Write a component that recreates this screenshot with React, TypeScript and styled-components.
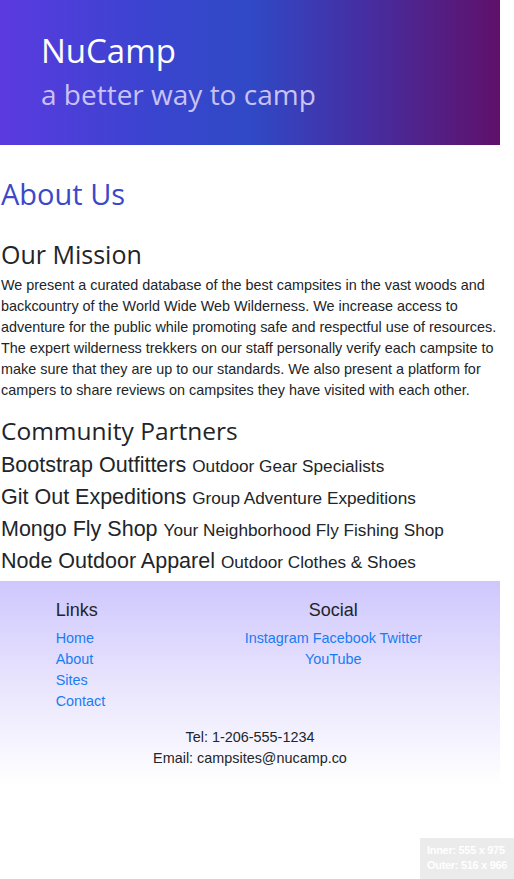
import React from "react";
import styled, { createGlobalStyle } from "styled-components";

const Global = createGlobalStyle`
  html, body { margin: 0; padding: 0; background: #fff; }
  body { font-family: "Liberation Sans", Arial, sans-serif; color: #212529; }
  * { box-sizing: border-box; }
`;

const Page = styled.div`
  width: 500px;
`;

const Header = styled.header`
  height: 145px;
  padding: 31px 0 0 41px;
  background: linear-gradient(90deg, #5b3ae0 0%, #3a44cf 30%, #3049c6 50%, #452fa3 72%, #5f116a 100%);
`;

const Brand = styled.h1`
  margin: 0;
  font-family: "Open Sans", sans-serif;
  font-weight: 400;
  font-size: 33px;
  line-height: 40px;
  color: #ffffff;
`;

const Tagline = styled.h2`
  margin: 5px 0 0;
  font-family: "Open Sans", sans-serif;
  font-weight: 400;
  font-size: 28px;
  line-height: 36px;
  color: #c9c2f5;
`;

const Main = styled.main`
  padding: 0 0 0 1px;
`;

const Heading = styled.h2<{ $size: number; $color?: string; $top: number }>`
  margin: ${(p) => p.$top}px 0 0;
  font-family: "Open Sans", sans-serif;
  font-weight: 400;
  font-size: ${(p) => p.$size}px;
  line-height: 1.2;
  color: ${(p) => p.$color || "#212529"};
`;

const Paragraph = styled.p`
  margin: 6px 0 0;
  font-size: 14.4px;
  line-height: 21px;
  width: 500px;
`;

const PartnerList = styled.div`
  display: flex;
  flex-direction: column;
  margin-top: 4px;
`;

const PartnerRow = styled.div`
  height: 32px;
  font-size: 21.5px;
  line-height: 32px;
  white-space: nowrap;
`;

const PartnerNote = styled.small`
  font-size: 80%;
  line-height: 1;
`;

const Footer = styled.footer`
  margin-top: 4px;
  height: 205px;
  padding-top: 18px;
  background: linear-gradient(180deg, #cec7fd 0%, #e6e2fd 45%, #ffffff 100%);
`;

const FooterCols = styled.div`
  display: grid;
  grid-template-columns: 166.67px 250px;
  padding-left: 41.67px;
`;

const FooterCol = styled.div<{ $center?: boolean }>`
  padding: 0 14px;
  text-align: ${(p) => (p.$center ? "center" : "left")};
`;

const FooterTitle = styled.h5`
  margin: 0 0 7px;
  font-size: 18px;
  font-weight: 400;
  line-height: 22px;
`;

const LinkList = styled.ul`
  list-style: none;
  margin: 0;
  padding: 0;
`;

const FooterLink = styled.a`
  color: #1a7cf4;
  text-decoration: none;
`;

const LinkItem = styled.li`
  font-size: 14.4px;
  line-height: 21px;
`;

const SocialLinks = styled.div`
  font-size: 14.4px;
  line-height: 21px;
  padding: 0 14px;
`;

const Contact = styled.div`
  margin-top: 15px;
  text-align: center;
  font-size: 14.4px;
  line-height: 21px;
`;

const Overlay = styled.div`
  position: fixed;
  right: 0;
  bottom: 0;
  width: 94px;
  height: 41px;
  padding: 5px 0 0 7px;
  background: #ebebeb;
  color: #ffffff;
  font-family: "Liberation Sans", Arial, sans-serif;
  font-size: 11px;
  font-weight: 700;
  line-height: 15px;
  letter-spacing: -0.3px;
`;

const partners = [
  ["Bootstrap Outfitters", "Outdoor Gear Specialists"],
  ["Git Out Expeditions", "Group Adventure Expeditions"],
  ["Mongo Fly Shop", "Your Neighborhood Fly Fishing Shop"],
  ["Node Outdoor Apparel", "Outdoor Clothes & Shoes"],
];

export default function App() {
  return (
    <Page>
      <Global />
      <Header>
        <Brand>NuCamp</Brand>
        <Tagline>a better way to camp</Tagline>
      </Header>
      <Main>
        <Heading $size={29} $color="#3b48c9" $top={32}>About Us</Heading>
        <Heading $size={25} $top={27}>Our Mission</Heading>
        <Paragraph>
          We present a curated database of the best campsites in the vast woods and backcountry of the World Wide Web
          Wilderness. We increase access to adventure for the public while promoting safe and respectful use of
          resources. The expert wilderness trekkers on our staff personally verify each campsite to make sure that they
          are up to our standards. We also present a platform for campers to share reviews on campsites they have
          visited with each other.
        </Paragraph>
        <Heading $size={24.5} $top={15}>Community Partners</Heading>
        <PartnerList>
          {partners.map(([name, note]) => (
            <PartnerRow key={name}>
              {name} <PartnerNote>{note}</PartnerNote>
            </PartnerRow>
          ))}
        </PartnerList>
      </Main>
      <Footer>
        <FooterCols>
          <FooterCol>
            <FooterTitle>Links</FooterTitle>
            <LinkList>
              {["Home", "About", "Sites", "Contact"].map((l) => (
                <LinkItem key={l}>
                  <FooterLink href="#">{l}</FooterLink>
                </LinkItem>
              ))}
            </LinkList>
          </FooterCol>
          <FooterCol $center>
            <FooterTitle>Social</FooterTitle>
            <SocialLinks>
              <FooterLink href="#">Instagram</FooterLink> <FooterLink href="#">Facebook</FooterLink>{" "}
              <FooterLink href="#">Twitter</FooterLink> <FooterLink href="#">YouTube</FooterLink>
            </SocialLinks>
          </FooterCol>
        </FooterCols>
        <Contact>
          <div>Tel: 1-206-555-1234</div>
          <div>Email: campsites@nucamp.co</div>
        </Contact>
      </Footer>
      <Overlay>
        <div>Inner: 555 x 975</div>
        <div>Outer: 516 x 966</div>
      </Overlay>
    </Page>
  );
}
